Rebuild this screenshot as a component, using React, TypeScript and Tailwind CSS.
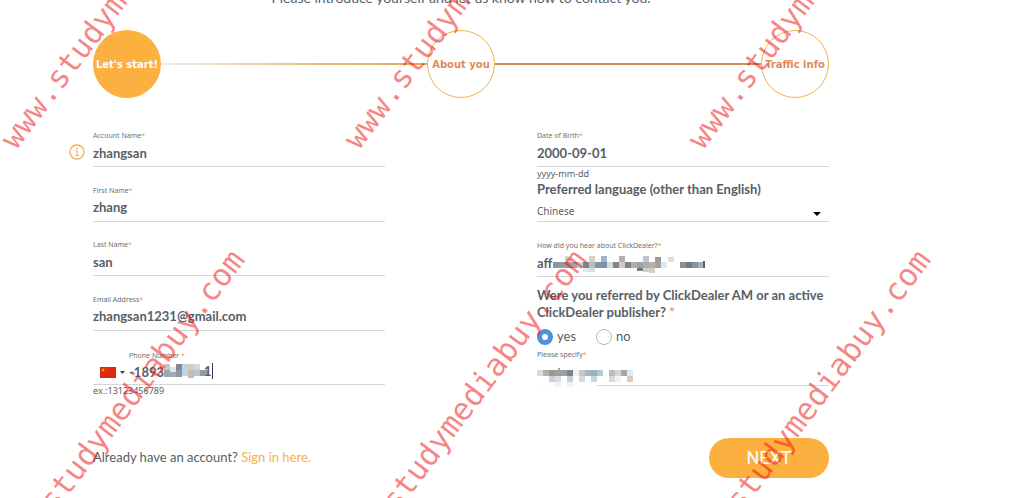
import { useState } from "react";
import type { ReactNode } from "react";

type Tile = [number, number, number, number, string];

const steps = ["Let's start!", "About you", "Traffic info"];

const watermarks = [
  "left-[20px] top-[154px]",
  "left-[363px] top-[154px]",
  "left-[707px] top-[154px]",
  "left-[14px] top-[576px]",
  "left-[356px] top-[576px]",
  "left-[700px] top-[576px]",
];

// x, y, width, height, colour
const sourceTiles: Tile[] = [
  [12, 0, 6, 6, "#d8d5d2"],
  [36, 0, 6, 6, "#d5d0cc"],
  [48, 0, 6, 6, "#9fb2c8"],
  [66, 0, 6, 6, "#b5b0ad"],
  [90, 0, 6, 6, "#b9c6d3"],
  [102, 1, 6, 5, "#9c9a98"],
  [115, 1, 6, 5, "#e8ddd3"],
  [0, 6, 6, 6, "#8e969b"],
  [6, 6, 6, 6, "#949aa2"],
  [12, 6, 6, 6, "#a39a98"],
  [18, 6, 6, 6, "#a8a09c"],
  [24, 6, 6, 6, "#c9d3de"],
  [30, 6, 6, 6, "#7f848a"],
  [36, 6, 6, 6, "#b9bdbf"],
  [42, 6, 6, 6, "#8494a8"],
  [48, 6, 6, 6, "#7f8fa6"],
  [54, 6, 6, 6, "#d3dbe1"],
  [60, 6, 6, 6, "#80858c"],
  [66, 6, 6, 6, "#d2c9c2"],
  [72, 6, 6, 6, "#7f838b"],
  [78, 6, 6, 6, "#b4ada6"],
  [84, 6, 6, 6, "#9aa3ac"],
  [90, 6, 6, 6, "#b3aca4"],
  [96, 6, 6, 6, "#b8b1aa"],
  [102, 6, 6, 6, "#a8a29b"],
  [108, 6, 6, 6, "#d8e8fa"],
  [127, 6, 6, 6, "#8a9099"],
  [133, 6, 6, 6, "#73777f"],
  [139, 6, 6, 6, "#8c9199"],
  [145, 6, 6, 6, "#9fb0bf"],
  [150, 5, 2, 7, "#5c6368"],
  [30, 12, 6, 4, "#dfe9f3"],
  [36, 12, 6, 4, "#e0dbd8"],
  [84, 12, 6, 3, "#74797f"],
  [90, 12, 6, 4, "#c9d0d6"],
  [96, 12, 6, 5, "#d5ccc4"],
];

const specifyTiles: Tile[] = [
  [0, 2, 6, 6, "#dcdad8"],
  [6, 2, 6, 6, "#b4b0ad"],
  [12, 2, 6, 6, "#9b9793"],
  [18, 2, 6, 6, "#a29f9b"],
  [21, 0, 2, 2, "#a0a5a8"],
  [24, 2, 6, 6, "#93a2b0"],
  [30, 2, 6, 6, "#7c828a"],
  [36, 2, 6, 6, "#eef0f2"],
  [42, 2, 6, 6, "#cfc6bf"],
  [48, 2, 6, 6, "#a4b8c8"],
  [54, 2, 6, 6, "#9ab2c4"],
  [60, 2, 6, 6, "#b5cbcb"],
  [72, 2, 6, 6, "#b4bdc5"],
  [78, 2, 6, 6, "#e0d2c6"],
  [84, 2, 6, 6, "#9ba7b3"],
  [90, 2, 6, 6, "#d5eafb"],
  [12, 8, 6, 6, "#c3d1e0"],
  [18, 8, 6, 6, "#dedbd8"],
  [30, 8, 6, 6, "#c8cdd2"],
  [42, 8, 6, 6, "#d4dbe2"],
  [54, 8, 6, 6, "#c9d6d6"],
  [72, 8, 6, 6, "#d5d9dc"],
  [78, 8, 6, 6, "#eef2f6"],
  [90, 8, 6, 6, "#dcc9b8"],
  [0, 16, 60, 3, "#fdfdfd"],
  [18, 14, 6, 5, "#f0f0f0"],
  [30, 14, 6, 5, "#f0f0f0"],
];

const phoneTiles: Tile[] = [
  [0, 0, 6, 6, "#c9c6c1"],
  [0, 6, 6, 7, "#9ea5ad"],
  [6, 3, 6, 6, "#dfe6ee"],
  [6, 8, 6, 5, "#a4abb2"],
  [12, 0, 6, 6, "#7f8a99"],
  [12, 6, 6, 7, "#8c98a6"],
  [18, 0, 6, 12, "#c0d3e8"],
  [24, 0, 6, 6, "#d2cbc6"],
  [24, 6, 6, 8, "#c5bbb2"],
  [30, 0, 6, 6, "#d9d6d3"],
  [30, 6, 6, 6, "#b8c4ce"],
  [36, 6, 8, 6, "#8f9aa6"],
];

function Mosaic({ tiles, className }: { tiles: Tile[]; className: string }) {
  return (
    <svg
      width="154"
      height="20"
      shapeRendering="crispEdges"
      aria-hidden="true"
      className={`absolute pointer-events-none ${className}`}
    >
      {tiles.map(([x, y, w, h, fill], i) => (
        <rect key={i} x={x} y={y} width={w} height={h} fill={fill} />
      ))}
    </svg>
  );
}

function InfoIcon() {
  return (
    <svg
      width="16"
      height="16"
      viewBox="0 0 16 16"
      fill="none"
      stroke="#f5b04f"
      aria-hidden="true"
      className="absolute -left-6 top-[15px]"
    >
      <circle cx="8" cy="8" r="7" strokeWidth="1.3" />
      <path d="M6.300 7h1.900v4.500M6.200 11.500h3.900" strokeWidth="1.1" />
      <circle cx="8" cy="4.600" r=".9" fill="#f5b04f" stroke="none" />
    </svg>
  );
}

function Star() {
  return <span className="text-[#f0a04b]">*</span>;
}

type FieldProps = {
  id: string;
  label: string;
  value: string;
  type?: string;
  children?: ReactNode;
};

function Field({ id, label, value, type = "text", children }: FieldProps) {
  return (
    <div className="relative">
      <label htmlFor={id} className="block font-['Noto_Sans',sans-serif] text-[7px] leading-[14px] text-[#6d7073]">
        {label}
        <Star />
      </label>
      <input
        id={id}
        type={type}
        defaultValue={value}
        className="block w-full h-6 border-b border-[#d5d7d8] bg-transparent pb-1 text-[13px] font-bold outline-none"
      />
      {children}
    </div>
  );
}

export default function App() {
  const [referred, setReferred] = useState("yes");

  return (
    <div className="relative min-h-screen overflow-hidden bg-white font-['Lato','Noto_Sans',sans-serif] text-[#566066]">
      <main className="pl-[93px] pr-[180px]">
        <p className="-mt-3 h-[42px] text-center text-sm leading-5">
          Please introduce yourself and let us know how to contact you.
        </p>

        {/* Steps */}
        <ol className="flex items-center font-['DejaVu_Sans',sans-serif] text-[10px] font-bold text-[#e08a5b]">
          <li className="flex size-[68px] shrink-0 items-center justify-center whitespace-nowrap rounded-full bg-[#fbb040] text-white">
            {steps[0]}
          </li>
          <li aria-hidden="true" className="h-[2px] flex-1 bg-linear-to-r from-[#eeeeee] via-[#e8c48a] to-[#e0a850]" />
          <li className="flex size-[68px] shrink-0 items-center justify-center whitespace-nowrap rounded-full border border-[#f0b04f]">
            {steps[1]}
          </li>
          <li aria-hidden="true" className="h-[2px] flex-1 bg-[#d18e60]" />
          <li className="flex size-[68px] shrink-0 items-center justify-center whitespace-nowrap rounded-full border border-[#f0b04f]">
            {steps[2]}
          </li>
        </ol>

        <form onSubmit={(e) => e.preventDefault()}>
          <div className="mt-[31px] grid grid-cols-2 gap-[152px]">
            {/* Left column */}
            <div>
              <div className="flex h-[202px] flex-col justify-between">
                <Field id="account" label="Account Name" value="zhangsan">
                  <InfoIcon />
                </Field>
                <Field id="first" label="First Name" value="zhang" />
                <Field id="last" label="Last Name" value="san" />
                <Field id="email" label="Email Address" value="zhangsan1231@gmail.com" type="email" />
              </div>

              <div className="relative mt-[18px]">
                <label
                  htmlFor="phone"
                  className="block pl-9 font-['Noto_Sans',sans-serif] text-[7px] leading-[14px] text-[#6d7073]"
                >
                  Phone Number <Star />
                </label>
                <div className="flex h-[22px] items-center border-b border-[#d5d7d8] pb-[3px] pl-[7px]">
                  <button type="button" aria-label="China" className="flex items-center gap-1">
                    <svg width="16" height="11" viewBox="0 0 16 11">
                      <rect width="16" height="11" fill="#de2910" />
                      <path d="M3 1l.6 1.4 1.4.1-1.1.9.4 1.4L3 4l-1.3.8.4-1.4L1 2.500l1.400-.1z" fill="#ffb000" />
                      <path d="M6 1h.7v.7H6zM7 2.400h.7v.7H7zM7 4h.7v.7H7z" fill="#ee6a10" />
                    </svg>
                    <svg width="5" height="3" viewBox="0 0 5 3">
                      <path d="M0 0h5L2.500 3z" fill="#444" />
                    </svg>
                  </button>
                  <input
                    id="phone"
                    type="tel"
                    defaultValue="-1893."
                    className="ml-1 h-full min-w-0 flex-1 bg-transparent text-[13px] font-bold outline-none"
                  />
                </div>
                <Mosaic tiles={phoneTiles} className="left-[71px] top-[15px]" />
                <span className="absolute left-[111px] top-[14px] h-4 border-r border-[#333c42] text-[13px] font-bold leading-4">
                  1
                </span>
              </div>
              <p className="font-['Noto_Sans',sans-serif] text-[9px] leading-3">ex.:13123456789</p>
            </div>

            {/* Right column */}
            <div>
              <Field id="birth" label="Date of Birth" value="2000-09-01" />
              <p className="font-['Noto_Sans',sans-serif] text-[9px] leading-[14px]">yyyy-mm-dd</p>
              <label htmlFor="language" className="block text-[13px] font-bold leading-4">
                Preferred language (other than English)
              </label>
              <div className="relative mb-[17px]">
                <select
                  id="language"
                  defaultValue="Chinese"
                  className="block h-[25px] w-full appearance-none border-b border-[#d5d7d8] bg-transparent pt-1 font-['Noto_Sans',sans-serif] text-[10px] outline-none"
                >
                  <option>Chinese</option>
                  <option>Russian</option>
                  <option>Spanish</option>
                </select>
                <svg width="8" height="4" viewBox="0 0 8 4" className="pointer-events-none absolute right-2 top-[15px]">
                  <path d="M0 0h8L4 4z" fill="#000" />
                </svg>
              </div>

              <Field id="source" label="How did you hear about ClickDealer?" value="aff">
                <Mosaic tiles={sourceTiles} className="left-4 top-[17px]" />
              </Field>

              <fieldset className="mt-[10px]">
                <legend className="text-[13px] font-bold leading-[17px]">
                  Were you referred by ClickDealer AM or an active ClickDealer publisher? <Star />
                </legend>
                <div className="mb-px mt-[6px] flex h-5 gap-5 text-[13px]">
                  {["yes", "no"].map((option) => (
                    <label key={option} className="flex items-center gap-1">
                      <input
                        type="radio"
                        name="referred"
                        value={option}
                        checked={referred === option}
                        onChange={() => setReferred(option)}
                        className="size-4 appearance-none rounded-full border border-[#b5b8ba] bg-white checked:border-[5px] checked:border-[#4f92dc]"
                      />
                      {option}
                    </label>
                  ))}
                </div>
              </fieldset>

              <Field id="specify" label="Please specify" value="">
                <Mosaic tiles={specifyTiles} className="left-0 top-5" />
              </Field>
            </div>
          </div>

          <div className="mt-[41px] flex items-center justify-between">
            <p className="text-[13px]">
              Already have an account?{" "}
              <a href="#signin" className="text-[#f5b04f]">
                Sign in here.
              </a>
            </p>
            <button
              type="submit"
              className="h-10 w-[120px] rounded-full bg-[#fbb040] font-['Roboto',sans-serif] text-lg text-white"
            >
              NEXT
            </button>
          </div>
        </form>
      </main>

      {/* Watermark */}
      <div aria-hidden="true" className="pointer-events-none absolute inset-0 select-none overflow-hidden">
        {watermarks.map((place) => (
          <span
            key={place}
            className={`absolute origin-bottom-left -translate-y-full -rotate-53 whitespace-nowrap font-['DejaVu_Sans_Mono',monospace] text-[31px] leading-8 text-[#ee0c0c]/50 ${place}`}
          >
            www.studymediabuy.com
          </span>
        ))}
      </div>
    </div>
  );
}
